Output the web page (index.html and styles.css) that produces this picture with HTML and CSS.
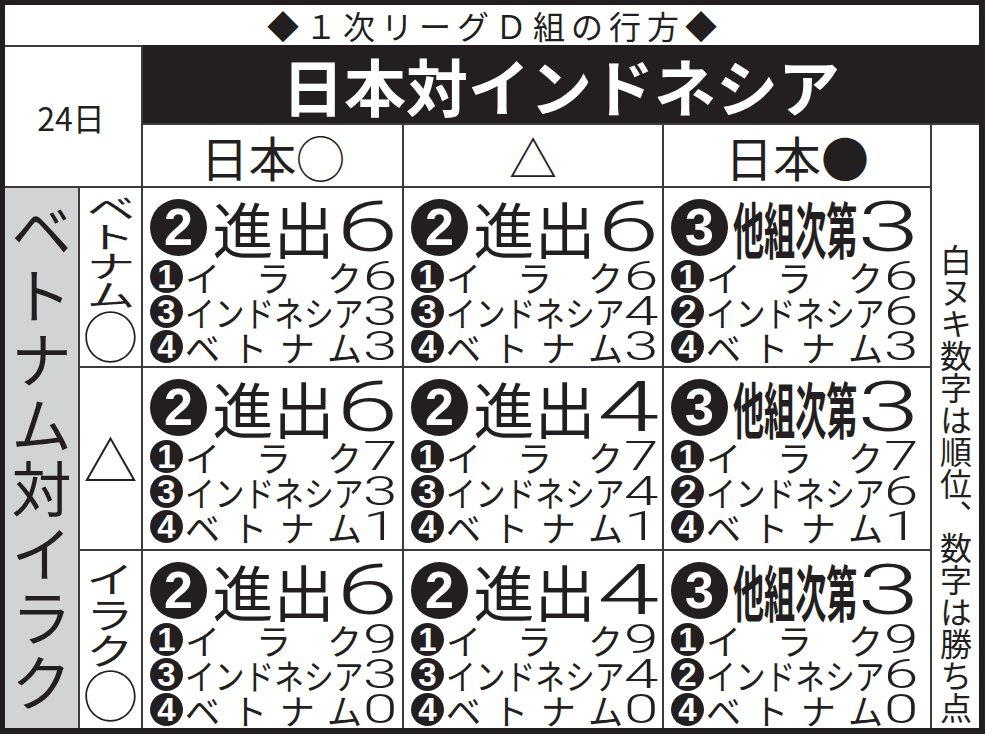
FILE: index.html
```html
<!DOCTYPE html>
<html lang="ja">
<head>
<meta charset="utf-8">
<title>1次リーグD組の行方</title>
<link rel="stylesheet" href="styles.css">
</head>
<body>
<div class="board">
  <div class="title">◆１次リーグＤ組の行方◆</div>
  <div class="date">24日</div>
  <div class="band">日本対インドネシア</div>
  <div class="sub s1">日本◯</div>
  <div class="sub s2">△</div>
  <div class="sub s3">日本●</div>
  <div class="note">白ヌキ数字は順位、数字は勝ち点</div>
  <div class="side"><span>ベ</span><span>ト</span><span>ナ</span><span>ム</span><span>対</span><span>イ</span><span>ラ</span><span>ク</span></div>

  <div class="lab l1"><i>ベ</i><i>ト</i><i>ナ</i><i>ム</i><em>◯</em></div>
  <div class="lab l2"><em>△</em></div>
  <div class="lab l3"><i>イ</i><i>ラ</i><i>ク</i><em>◯</em></div>

  <!-- row 1 -->
  <div class="cell">
    <div class="big"><span class="cb">2</span><span class="bk">進出</span><span class="bn"><b>6</b></span></div>
    <div class="ln"><span class="cs">1</span><span class="nm"><i>イ</i><i>ラ</i><i>ク</i></span><span class="sn"><b>6</b></span></div>
    <div class="ln"><span class="cs">3</span><span class="nm long"><i>インドネシア</i></span><span class="sn"><b>3</b></span></div>
    <div class="ln"><span class="cs">4</span><span class="nm"><i>ベ</i><i>ト</i><i>ナ</i><i>ム</i></span><span class="sn"><b>3</b></span></div>
  </div>
  <div class="cell">
    <div class="big"><span class="cb">2</span><span class="bk">進出</span><span class="bn"><b>6</b></span></div>
    <div class="ln"><span class="cs">1</span><span class="nm"><i>イ</i><i>ラ</i><i>ク</i></span><span class="sn"><b>6</b></span></div>
    <div class="ln"><span class="cs">3</span><span class="nm long"><i>インドネシア</i></span><span class="sn"><b>4</b></span></div>
    <div class="ln"><span class="cs">4</span><span class="nm"><i>ベ</i><i>ト</i><i>ナ</i><i>ム</i></span><span class="sn"><b>3</b></span></div>
  </div>
  <div class="cell">
    <div class="big"><span class="cb">3</span><span class="bk cond"><i>他組次第</i></span><span class="bn"><b>3</b></span></div>
    <div class="ln"><span class="cs">1</span><span class="nm"><i>イ</i><i>ラ</i><i>ク</i></span><span class="sn"><b>6</b></span></div>
    <div class="ln"><span class="cs">2</span><span class="nm long"><i>インドネシア</i></span><span class="sn"><b>6</b></span></div>
    <div class="ln"><span class="cs">4</span><span class="nm"><i>ベ</i><i>ト</i><i>ナ</i><i>ム</i></span><span class="sn"><b>3</b></span></div>
  </div>

  <!-- row 2 -->
  <div class="cell">
    <div class="big"><span class="cb">2</span><span class="bk">進出</span><span class="bn"><b>6</b></span></div>
    <div class="ln"><span class="cs">1</span><span class="nm"><i>イ</i><i>ラ</i><i>ク</i></span><span class="sn"><b>7</b></span></div>
    <div class="ln"><span class="cs">3</span><span class="nm long"><i>インドネシア</i></span><span class="sn"><b>3</b></span></div>
    <div class="ln"><span class="cs">4</span><span class="nm"><i>ベ</i><i>ト</i><i>ナ</i><i>ム</i></span><span class="sn"><b>1</b></span></div>
  </div>
  <div class="cell">
    <div class="big"><span class="cb">2</span><span class="bk">進出</span><span class="bn"><b>4</b></span></div>
    <div class="ln"><span class="cs">1</span><span class="nm"><i>イ</i><i>ラ</i><i>ク</i></span><span class="sn"><b>7</b></span></div>
    <div class="ln"><span class="cs">3</span><span class="nm long"><i>インドネシア</i></span><span class="sn"><b>4</b></span></div>
    <div class="ln"><span class="cs">4</span><span class="nm"><i>ベ</i><i>ト</i><i>ナ</i><i>ム</i></span><span class="sn"><b>1</b></span></div>
  </div>
  <div class="cell">
    <div class="big"><span class="cb">3</span><span class="bk cond"><i>他組次第</i></span><span class="bn"><b>3</b></span></div>
    <div class="ln"><span class="cs">1</span><span class="nm"><i>イ</i><i>ラ</i><i>ク</i></span><span class="sn"><b>7</b></span></div>
    <div class="ln"><span class="cs">2</span><span class="nm long"><i>インドネシア</i></span><span class="sn"><b>6</b></span></div>
    <div class="ln"><span class="cs">4</span><span class="nm"><i>ベ</i><i>ト</i><i>ナ</i><i>ム</i></span><span class="sn"><b>1</b></span></div>
  </div>

  <!-- row 3 -->
  <div class="cell">
    <div class="big"><span class="cb">2</span><span class="bk">進出</span><span class="bn"><b>6</b></span></div>
    <div class="ln"><span class="cs">1</span><span class="nm"><i>イ</i><i>ラ</i><i>ク</i></span><span class="sn"><b>9</b></span></div>
    <div class="ln"><span class="cs">3</span><span class="nm long"><i>インドネシア</i></span><span class="sn"><b>3</b></span></div>
    <div class="ln"><span class="cs">4</span><span class="nm"><i>ベ</i><i>ト</i><i>ナ</i><i>ム</i></span><span class="sn"><b>0</b></span></div>
  </div>
  <div class="cell">
    <div class="big"><span class="cb">2</span><span class="bk">進出</span><span class="bn"><b>4</b></span></div>
    <div class="ln"><span class="cs">1</span><span class="nm"><i>イ</i><i>ラ</i><i>ク</i></span><span class="sn"><b>9</b></span></div>
    <div class="ln"><span class="cs">3</span><span class="nm long"><i>インドネシア</i></span><span class="sn"><b>4</b></span></div>
    <div class="ln"><span class="cs">4</span><span class="nm"><i>ベ</i><i>ト</i><i>ナ</i><i>ム</i></span><span class="sn"><b>0</b></span></div>
  </div>
  <div class="cell">
    <div class="big"><span class="cb">3</span><span class="bk cond"><i>他組次第</i></span><span class="bn"><b>3</b></span></div>
    <div class="ln"><span class="cs">1</span><span class="nm"><i>イ</i><i>ラ</i><i>ク</i></span><span class="sn"><b>9</b></span></div>
    <div class="ln"><span class="cs">2</span><span class="nm long"><i>インドネシア</i></span><span class="sn"><b>6</b></span></div>
    <div class="ln"><span class="cs">4</span><span class="nm"><i>ベ</i><i>ト</i><i>ナ</i><i>ム</i></span><span class="sn"><b>0</b></span></div>
  </div>
</div>
</body>
</html>
```

FILE: styles.css
```css
* { box-sizing: border-box; margin: 0; padding: 0; }
html, body { background: #fff; }
body {
  margin: 0;
  width: 985px;
  height: 734px;
  overflow: hidden;
  font-family: "Noto Sans CJK JP", "Noto Sans", sans-serif;
  color: #231f20;
}
i, em, b { font-style: normal; font-weight: inherit; }

.board {
  display: grid;
  width: 985px;
  height: 734px;
  background: #3d3a3b;
  border-style: solid;
  border-color: #231f20;
  border-width: 5px 6px 6px 5px;
  gap: 2px;
  grid-template-columns: 73px 61px 259px 258px 266px 47px;
  grid-template-rows: 40px 76px 61px 178px 181px 177px;
}
.board > div { background: #fff; }

.title {
  grid-column: 1 / -1;
  grid-row: 1;
  display: flex;
  align-items: center;
  justify-content: center;
  font-size: 32px;
  line-height: 1;
  letter-spacing: 6px;
  padding-left: 6px;
}

.date {
  grid-column: 1 / 3;
  grid-row: 2 / 4;
  display: flex;
  align-items: center;
  justify-content: center;
  font-size: 32px;
  line-height: 1;
  padding-right: 4px;
}

.board > .band {
  grid-column: 3 / 7;
  grid-row: 2;
  background: #231f20;
  color: #fff;
  display: flex;
  align-items: center;
  justify-content: center;
  font-size: 62px;
  font-weight: 700;
  line-height: 1;
  box-shadow: 0 -2px 0 #231f20, 2px 0 0 #231f20;
}

.sub {
  grid-row: 3;
  display: flex;
  align-items: center;
  justify-content: center;
  font-size: 48px;
  line-height: 1;
}
.s1 { grid-column: 3; }
.s2 { grid-column: 4; }
.s3 { grid-column: 5; }

.note {
  grid-column: 6;
  grid-row: 3 / 7;
  writing-mode: vertical-rl;
  text-align: end;
  font-size: 32px;
  line-height: 47px;
  padding-bottom: 4px;
}

.board > .side {
  grid-column: 1;
  grid-row: 4 / 7;
  background: #d1d3d4;
  display: flex;
  flex-direction: column;
  align-items: center;
  justify-content: space-between;
  padding: 10px 0 18px;
  font-size: 60px;
  font-weight: 400;
  line-height: 60px;
}

.lab {
  grid-column: 2;
  display: flex;
  flex-direction: column;
  align-items: center;
  justify-content: center;
}
.l1 { grid-row: 4; }
.l2 { grid-row: 5; }
.l3 { grid-row: 6; }
.lab i {
  display: block;
  font-size: 30px;
  line-height: 29px;
  height: 29px;
  transform: scaleX(1.6);
}
.l3 i { font-size: 36px; line-height: 36px; height: 36px; transform: scaleX(1.3); }
.lab em { display: block; font-size: 54px; line-height: 54px; }

.cell {
  display: flex;
  flex-direction: column;
  padding: 7px 0 0 7px;
}
.cell > div { width: 245px; }

.big {
  display: flex;
  align-items: center;
  justify-content: space-between;
  height: 64px;
}
.cb {
  width: 57px;
  height: 57px;
  border-radius: 50%;
  background: #231f20;
  color: #fff;
  font-family: "Liberation Sans", Arial, sans-serif;
  font-weight: 700;
  font-size: 52px;
  line-height: 57px;
  text-align: center;
}
.bk { font-size: 61px; line-height: 1; }
.cond { width: 124px; overflow: visible; }
.cond i { display: inline-block; white-space: nowrap; font-weight: 700; transform: scaleX(0.51); transform-origin: left center; }
.bn {
  width: 55px;
  display: flex;
  justify-content: center;
  font-family: "Roboto", "Noto Sans", sans-serif;
  font-weight: 300;
  font-size: 70px;
  line-height: 60px;
}
.bn b { display: inline-block; transform: scaleX(1.6); }

.ln {
  display: flex;
  align-items: center;
  height: 35px;
}
.cs {
  flex: none;
  width: 33px;
  height: 33px;
  border-radius: 50%;
  background: #231f20;
  color: #fff;
  font-family: "Liberation Sans", Arial, sans-serif;
  font-weight: 700;
  font-size: 33px;
  line-height: 33px;
  text-align: center;
}
.nm {
  flex: 1;
  min-width: 0;
  display: flex;
  justify-content: space-between;
  padding: 0 3px 0 2px;
  font-size: 35px;
  line-height: 35px;
  white-space: nowrap;
}
.nm.long { display: block; }
.nm.long i { display: inline-block; transform: scaleX(0.85); transform-origin: left center; }
.sn {
  flex: none;
  width: 30px;
  display: flex;
  justify-content: center;
  font-family: "Roboto", "Noto Sans", sans-serif;
  font-weight: 300;
  font-size: 40px;
  line-height: 35px;
}
.sn b { display: inline-block; transform: scaleX(1.55); }
```
